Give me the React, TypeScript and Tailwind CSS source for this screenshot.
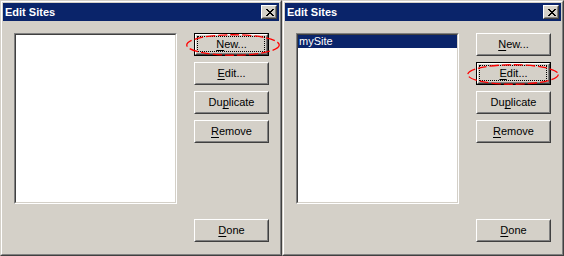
import React from 'react'

type BtnProps = {
  label: string
  mnemonic: number
  focused?: boolean
  ellipse?: { left: number; top: number; width: number; height: number }
}

function Label({ label, mnemonic }: { label: string; mnemonic: number }) {
  return (
    <span className="leading-none text-black">
      {label.slice(0, mnemonic)}
      <u className="underline underline-offset-[2px]">{label[mnemonic]}</u>
      {label.slice(mnemonic + 1)}
    </span>
  )
}

function Btn({ label, mnemonic, focused, ellipse }: BtnProps) {
  const face = (
    <div className="flex h-full w-full border border-t-white border-l-white border-b-[#404040] border-r-[#404040]">
      <div className="relative flex flex-1 items-center justify-center border border-t-[#d4d0c8] border-l-[#d4d0c8] border-b-[#808080] border-r-[#808080] bg-[#d4d0c8]">
        {focused && (
          <div className="absolute left-[0px] top-[0px] right-[1px] bottom-[1px] border border-dotted border-black" />
        )}
        <Label label={label} mnemonic={mnemonic} />
      </div>
    </div>
  )
  return (
    <div className="relative h-[23px] w-[75px]">
      {focused ? <div className="h-full w-full border border-black">{face}</div> : face}
      {ellipse && (
        <svg
          className="pointer-events-none absolute"
          style={{ left: ellipse.left, top: ellipse.top }}
          width={ellipse.width}
          height={ellipse.height}
        >
          <ellipse
            cx={ellipse.width / 2}
            cy={ellipse.height / 2}
            rx={ellipse.width / 2 - 0.75}
            ry={ellipse.height / 2 - 0.75}
            fill="none"
            stroke="#ff0000"
            strokeWidth={1.3}
            strokeDasharray="9 3"
          />
        </svg>
      )}
    </div>
  )
}

function CloseGlyph() {
  const rows = ['11000011', '01100110', '00111100', '00011000', '00111100', '01100110', '11000011']
  return (
    <svg width={8} height={7} shapeRendering="crispEdges">
      {rows.flatMap((r, y) =>
        r.split('').map((c, x) => (c === '1' ? <rect key={`${x}-${y}`} x={x} y={y} width={1} height={1} fill="#000" /> : null))
      )}
    </svg>
  )
}

function Dialog({ focus, selected }: { focus: 'new' | 'edit'; selected: boolean }) {
  return (
    <div className="h-[256px] w-[282px] border border-t-[#d4d0c8] border-l-[#d4d0c8] border-b-[#404040] border-r-[#404040]">
      <div className="flex h-full w-full flex-col border border-t-white border-l-white border-b-[#808080] border-r-[#808080] bg-[#d4d0c8] p-[1px]">
        {/* title bar */}
        <div className="flex h-[18px] items-center justify-between bg-[#0a246a] pl-[2px] pr-[2px]">
          <span className="text-[11px] font-bold leading-none text-white">Edit Sites</span>
          <div className="flex h-[14px] w-[16px] border border-t-white border-l-white border-b-[#404040] border-r-[#404040]">
            <div className="flex flex-1 items-center justify-center border border-t-[#d4d0c8] border-l-[#d4d0c8] border-b-[#808080] border-r-[#808080] bg-[#d4d0c8] pl-[1px]">
              <CloseGlyph />
            </div>
          </div>
        </div>

        {/* body */}
        <div className="flex items-start gap-[17px] pl-[11px] pt-[12px]">
          <div className="h-[171px] w-[163px] border border-t-[#808080] border-l-[#808080] border-b-white border-r-white">
            <div className="h-full w-full border border-t-[#404040] border-l-[#404040] border-b-[#d4d0c8] border-r-[#d4d0c8] bg-white">
              {selected && (
                <div className="flex h-[13px] items-center bg-[#0a246a] pl-[1px] text-[11px] leading-none text-white">
                  mySite
                </div>
              )}
            </div>
          </div>

          <div className="flex h-[209px] flex-col">
            <div className="flex flex-col gap-[6px]">
              <Btn
                label="New..."
                mnemonic={0}
                focused={focus === 'new'}
                ellipse={focus === 'new' ? { left: -8, top: 1, width: 94, height: 22 } : undefined}
              />
              <Btn
                label="Edit..."
                mnemonic={0}
                focused={focus === 'edit'}
                ellipse={focus === 'edit' ? { left: -9, top: 2, width: 92, height: 21 } : undefined}
              />
              <Btn label="Duplicate" mnemonic={2} />
              <Btn label="Remove" mnemonic={0} />
            </div>
            <div className="mt-auto">
              <Btn label="Done" mnemonic={0} />
            </div>
          </div>
        </div>
      </div>
    </div>
  )
}

export default function App() {
  return (
    <div className="flex h-[256px] w-[564px] font-['Liberation_Sans',Arial,sans-serif] text-[11px]">
      <Dialog focus="new" selected={false} />
      <Dialog focus="edit" selected={true} />
    </div>
  )
}
